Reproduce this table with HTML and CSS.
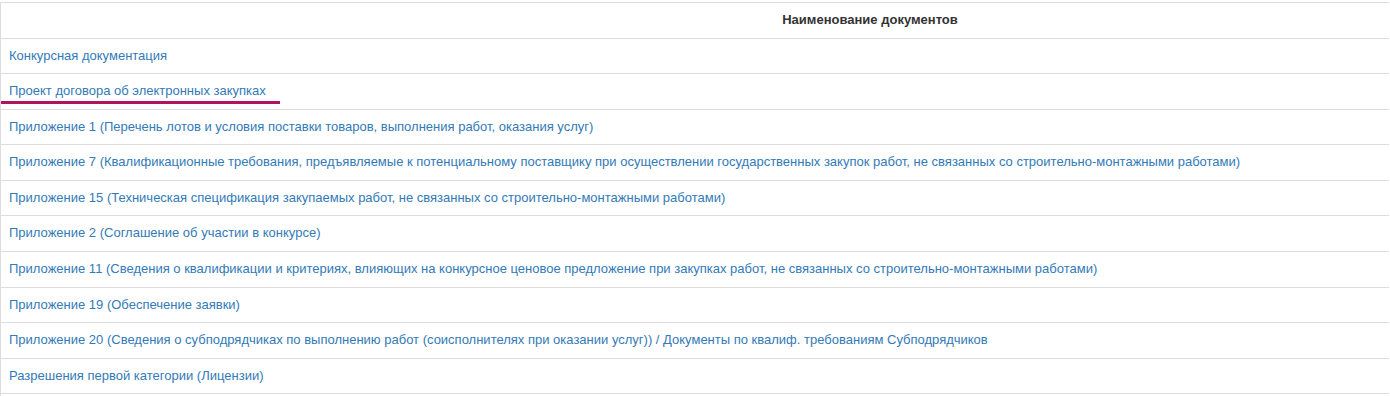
FILE: index.html
```html
<!DOCTYPE html>
<html lang="ru">
<head>
<meta charset="utf-8">
<title>Документы</title>
<link rel="stylesheet" href="styles.css">
</head>
<body>
<table class="docs">
  <thead>
    <tr>
      <th class="spacer"></th>
      <th class="title">Наименование документов</th>
    </tr>
  </thead>
  <tbody>
    <tr><td colspan="2"><a href="#">Конкурсная документация</a></td></tr>
    <tr><td colspan="2"><a href="#" class="active">Проект договора об электронных закупках</a></td></tr>
    <tr><td colspan="2"><a href="#">Приложение 1 (Перечень лотов и условия поставки товаров, выполнения работ, оказания услуг)</a></td></tr>
    <tr><td colspan="2"><a href="#">Приложение 7 (Квалификационные требования, предъявляемые к потенциальному поставщику при осуществлении государственных закупок работ, не связанных со строительно-монтажными работами)</a></td></tr>
    <tr><td colspan="2"><a href="#">Приложение 15 (Техническая спецификация закупаемых работ, не связанных со строительно-монтажными работами)</a></td></tr>
    <tr><td colspan="2"><a href="#">Приложение 2 (Соглашение об участии в конкурсе)</a></td></tr>
    <tr><td colspan="2"><a href="#">Приложение 11 (Сведения о квалификации и критериях, влияющих на конкурсное ценовое предложение при закупках работ, не связанных со строительно-монтажными работами)</a></td></tr>
    <tr><td colspan="2"><a href="#">Приложение 19 (Обеспечение заявки)</a></td></tr>
    <tr><td colspan="2"><a href="#">Приложение 20 (Сведения о субподрядчиках по выполнению работ (соисполнителях при оказании услуг)) / Документы по квалиф. требованиям Субподрядчиков</a></td></tr>
    <tr><td colspan="2"><a href="#">Разрешения первой категории (Лицензии)</a></td></tr>
    <tr><td colspan="2" class="empty"></td></tr>
  </tbody>
</table>
</body>
</html>
```

FILE: styles.css
```css
html, body {
  margin: 0;
  padding: 0;
  background: #fff;
}
body {
  font-family: "Liberation Sans", Arial, sans-serif;
  font-size: 13px;
  line-height: 1.42857143;
  color: #333;
  padding-top: 2px;
}
.docs {
  width: 1389px;
  border-collapse: collapse;
  border-spacing: 0;
  border-left: 1px solid #ddd;
}
.docs th,
.docs td {
  padding: 8px;
  border-top: 1px solid #ddd;
  text-align: left;
  vertical-align: top;
}
.docs td.empty {
  height: 19px;
}
.docs thead th {
  border-bottom: 1px solid #ddd;
  font-weight: bold;
  color: #333;
}
.docs .spacer {
  width: 334px;
}
.docs .title {
  text-align: center;
}
.docs a {
  color: #337ab7;
  text-decoration: none;
}
.docs a.active {
  position: relative;
}
.docs a.active::after {
  content: "";
  position: absolute;
  left: -8px;
  right: -14px;
  bottom: -6px;
  height: 3px;
  background: #b0145e;
}
```
